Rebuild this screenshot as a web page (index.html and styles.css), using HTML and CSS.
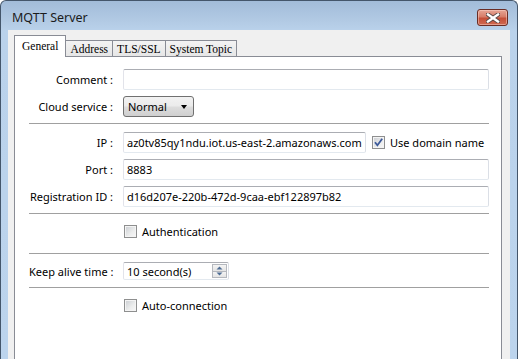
FILE: index.html
```html
<!DOCTYPE html>
<html>
<head>
<meta charset="utf-8">
<link rel="stylesheet" href="styles.css">
</head>
<body>
<div class="window">
  <div class="titlebar">
    <span class="title">MQTT Server</span>
    <div class="close">
      <svg width="14" height="10" viewBox="0 0 14 10">
        <path d="M2 1.5 L12 8.5 M12 1.5 L2 8.5" stroke="#5a4a48" stroke-width="4.2" stroke-linecap="square"/>
        <path d="M2 1.5 L12 8.5 M12 1.5 L2 8.5" stroke="#ffffff" stroke-width="2.4" stroke-linecap="square"/>
      </svg>
    </div>
  </div>
  <div class="client">
    <div class="tabs">
      <div class="tab active">General</div>
      <div class="tab">Address</div>
      <div class="tab">TLS/SSL</div>
      <div class="tab">System Topic</div>
    </div>
    <div class="panel">
      <div class="sec sec1">
        <span class="lbl">Comment :</span>
        <div class="tb"></div>
        <span class="lbl">Cloud service :</span>
        <div class="combo"><span>Normal</span><span class="arrow"></span></div>
      </div>
      <div class="sec sec2">
        <span class="lbl">IP :</span>
        <div class="iprow">
          <div class="tb ip">az0tv85qy1ndu.iot.us-east-2.amazonaws.com</div>
          <span class="cb checked">
            <svg width="11" height="11" viewBox="0 0 11 11"><path d="M2 5.2 L4.4 8.3 L9.2 1.8" fill="none" stroke="#3d5a9a" stroke-width="1.8"/></svg>
          </span>
          <span class="cbtext">Use domain name</span>
        </div>
        <span class="lbl">Port :</span>
        <div class="tb">8883</div>
        <span class="lbl">Registration ID :</span>
        <div class="tb">d16d207e-220b-472d-9caa-ebf122897b82</div>
      </div>
      <div class="sec sec3">
        <span></span>
        <div class="checkrow"><span class="cb"></span><span class="cbtext">Authentication</span></div>
      </div>
      <div class="sec sec4">
        <span class="lbl">Keep alive time :</span>
        <div class="spin">
          <span>10 second(s)</span>
          <span class="spinbtns">
            <span class="sb"><svg width="7" height="4" viewBox="0 0 7 4"><path d="M0.5 3.5 L3.5 0.5 L6.5 3.5 Z" fill="#4e6d94"/></svg></span>
            <span class="sb"><svg width="7" height="4" viewBox="0 0 7 4"><path d="M0.5 0.5 L3.5 3.5 L6.5 0.5 Z" fill="#4e6d94"/></svg></span>
          </span>
        </div>
      </div>
      <div class="sec sec5">
        <span></span>
        <div class="checkrow"><span class="cb"></span><span class="cbtext">Auto-connection</span></div>
      </div>
    </div>
  </div>
</div>
</body>
</html>
```
FILE: styles.css
```css
html, body {
  margin: 0;
  padding: 0;
}
body {
  width: 518px;
  height: 359px;
  overflow: hidden;
  background: #ffffff;
  font-family: "Noto Sans", "DejaVu Sans", sans-serif;
  font-size: 11px;
  color: #000;
}
.window {
  width: 518px;
  height: 359px;
  box-sizing: border-box;
  border: 1px solid #44566b;
  border-bottom: none;
  border-radius: 6px 6px 0 0;
  background: linear-gradient(#a2bcd9 0px, #b2cae4 20px, #bad2eb 30px, #bcd4ed 100%);
  display: flex;
  flex-direction: column;
  overflow: hidden;
}
.titlebar {
  height: 29px;
  flex: none;
  display: flex;
  align-items: center;
  justify-content: space-between;
  padding: 0 9px 0 11px;
}
.title {
  font-size: 12.5px;
  color: #1b1b1b;
  margin-top: 3px;
}
.close {
  width: 31px;
  height: 17px;
  box-sizing: border-box;
  margin-top: 4px;
  border: 1px solid #6a2d25;
  border-radius: 3px;
  background: linear-gradient(#e6a595 0%, #d77d69 45%, #c54f38 55%, #cf6a52 100%);
  box-shadow: inset 0 0 0 1px rgba(255, 220, 210, 0.45);
  display: flex;
  align-items: center;
  justify-content: center;
}
.client {
  flex: 1;
  margin: 0 7px;
  background: #f0f0f0;
  padding: 5px 8px 0 6px;
  display: flex;
  flex-direction: column;
}
.tabs {
  display: flex;
  align-items: flex-end;
  height: 22px;
  margin-bottom: -1px;
  position: relative;
  z-index: 1;
  font-family: "Liberation Serif", "Times New Roman", serif;
  font-size: 11.5px;
}
.tab {
  height: 17px;
  box-sizing: border-box;
  border: 1px solid #898c95;
  margin-left: -1px;
  padding: 0 4px;
  background: linear-gradient(#f3f3f3, #e6e6e6);
  display: flex;
  align-items: center;
  color: #000;
}
.tab.active {
  height: 22px;
  margin-left: 0;
  padding: 0 7px 1px 7px;
  border-bottom: none;
  background: #ffffff;
  position: relative;
  z-index: 2;
}
.panel {
  flex: 1;
  background: #ffffff;
  border: 1px solid #898c95;
  border-bottom: none;
  padding: 0 12px 0 14px;
}
.sec {
  display: grid;
  grid-template-columns: 84px 1fr;
  column-gap: 10px;
  row-gap: 6px;
  align-items: center;
}
.sec1 { padding: 12px 0 6px; }
.sec2 { border-top: 1px solid #a0a0a0; padding: 8px 0 6px; }
.sec3 { border-top: 1px solid #a0a0a0; padding: 11px 0 15px; }
.sec4 { border-top: 1px solid #a0a0a0; padding: 8px 0 7px; }
.sec5 { border-top: 1px solid #a0a0a0; padding: 11px 0 15px; }
.lbl {
  text-align: right;
  white-space: nowrap;
  line-height: 15px;
}
.tb {
  height: 21px;
  box-sizing: border-box;
  border: 1px solid;
  border-color: #abadb3 #dbdfe6 #e3e9ef #e2e3ea;
  border-radius: 2px;
  padding: 0 3px;
  display: flex;
  align-items: center;
  white-space: nowrap;
  overflow: hidden;
  background: #fff;
}
.combo {
  width: 71px;
  height: 21px;
  box-sizing: border-box;
  border: 1px solid #707070;
  border-radius: 3px;
  background: linear-gradient(#f2f2f2 0%, #ebebeb 48%, #dddddd 52%, #cfcfcf 100%);
  display: flex;
  align-items: center;
  justify-content: space-between;
  padding: 0 6px 0 4px;
}
.arrow {
  width: 0;
  height: 0;
  border-left: 3.5px solid transparent;
  border-right: 3.5px solid transparent;
  border-top: 4px solid #000;
}
.iprow {
  display: flex;
  align-items: center;
}
.tb.ip {
  width: 243px;
  flex: none;
  margin-right: 6px;
}
.cb {
  width: 13px;
  height: 13px;
  box-sizing: border-box;
  border: 1px solid #8e8f8f;
  background: linear-gradient(135deg, #c9ccd1 0%, #eceded 60%, #f8f8f8 100%);
  box-shadow: inset 0 0 0 1px #f4f4f4;
  flex: none;
  display: flex;
  align-items: center;
  justify-content: center;
}
.cb svg {
  display: block;
}
.cbtext {
  margin-left: 5px;
  white-space: nowrap;
  line-height: 15px;
}
.checkrow {
  height: 13px;
  display: flex;
  align-items: center;
  margin-left: 1px;
}
.spin {
  width: 106px;
  height: 18px;
  box-sizing: border-box;
  border: 1px solid;
  border-color: #abadb3 #dbdfe6 #e3e9ef #e2e3ea;
  border-radius: 2px;
  display: flex;
  align-items: center;
  justify-content: space-between;
  padding: 0 1px 0 3px;
}
.spinbtns {
  display: flex;
  flex-direction: column;
  width: 15px;
  height: 14px;
}
.sb {
  flex: 1;
  box-sizing: border-box;
  border: 1px solid #b5b8be;
  background: linear-gradient(#f4f4f4, #e4e4e4);
  display: flex;
  align-items: center;
  justify-content: center;
}
.sb + .sb {
  border-top: none;
}
.sb svg {
  display: block;
}
```
